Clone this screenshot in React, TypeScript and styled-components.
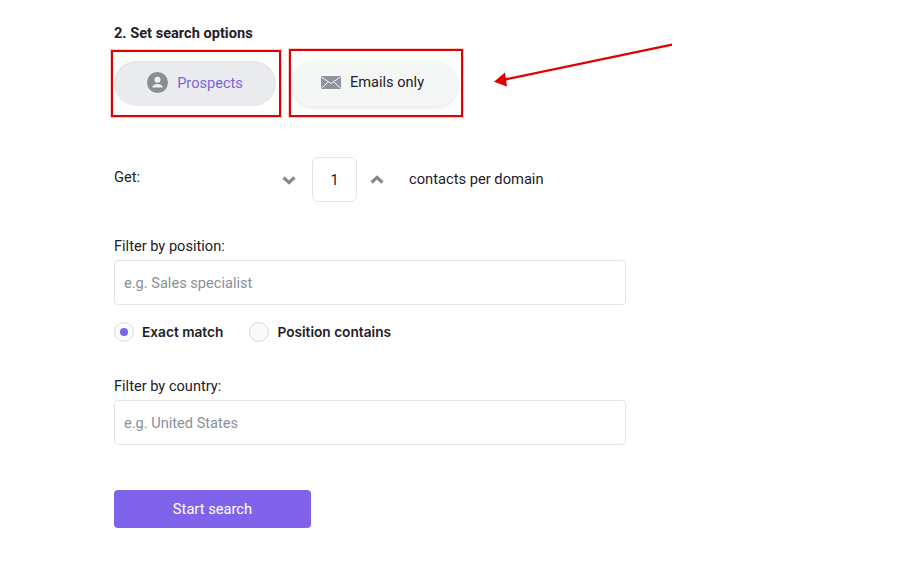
import React from "react";
import styled, { createGlobalStyle } from "styled-components";

const Global = createGlobalStyle`
  html, body { margin: 0; padding: 0; background: #fff; }
  body { font-family: Roboto, "Liberation Sans", sans-serif; color: #1e2026; }
  * { box-sizing: border-box; }
`;

const Page = styled.div`
  position: relative;
  width: 899px;
  height: 563px;
  overflow: hidden;
  padding: 24px 0 0 114px;
`;

const Heading = styled.h2`
  margin: 0;
  font-size: 14.6px;
  line-height: 18px;
  font-weight: 700;
  color: #1e2026;
`;

const Tabs = styled.div`
  display: flex;
  margin-top: 19px;
  gap: 15px;
  height: 45px;
`;

const Tab = styled.div<{ $active?: boolean; $w: number }>`
  width: ${(p) => p.$w}px;
  height: 45px;
  border-radius: 23px;
  display: flex;
  align-items: center;
  justify-content: center;
  gap: 9px;
  padding: ${(p) => (p.$active ? "0 0 2px 0" : "0 4px 3px 0")};
  font-size: 14.6px;
  background: ${(p) => (p.$active ? "#e9ebee" : "#f5f7f7")};
  color: ${(p) => (p.$active ? "#7d63e0" : "#1e2026")};
  box-shadow: ${(p) =>
    p.$active
      ? "inset 0 1px 3px rgba(30,32,38,0.05)"
      : "0 2px 5px rgba(30,32,38,0.10)"};
`;

const CountRow = styled.div`
  display: flex;
  align-items: center;
  margin-top: 51px;
  height: 45px;
`;

const GetLabel = styled.div`
  width: 166px;
  font-size: 14.6px;
  padding-bottom: 6px;
`;

const Chevron = styled.svg`
  width: 18px;
  height: 12px;
  display: block;
`;

const CountBox = styled.div`
  width: 45px;
  height: 45px;
  margin: 0 11px 0 14px;
  border: 1px solid #e2e4e8;
  border-radius: 6px;
  display: flex;
  align-items: center;
  justify-content: center;
  font-size: 14.6px;
`;

const CountUnit = styled.div`
  margin-left: 23px;
  padding-bottom: 2px;
  font-size: 14.7px;
`;

const Field = styled.div`
  margin-top: 35px;
  width: 512px;
`;

const FieldLabel = styled.div`
  font-size: 14.6px;
  line-height: 18px;
  margin-bottom: 5px;
`;

const Input = styled.input`
  display: block;
  width: 100%;
  height: 45px;
  border: 1px solid #e2e4e8;
  border-radius: 4px;
  padding: 0 9px;
  font: 400 14.6px Roboto, sans-serif;
  outline: none;
  &::placeholder { color: #8a909a; opacity: 1; }
`;

const Radios = styled.div`
  display: flex;
  align-items: center;
  margin-top: 17px;
  height: 20px;
`;

const Radio = styled.div<{ $checked?: boolean }>`
  width: 20px;
  height: 20px;
  border-radius: 50%;
  border: 1px solid #d8dae0;
  background: #f9fafc;
  display: flex;
  align-items: center;
  justify-content: center;
  margin-right: 8px;
  &::after {
    content: "";
    display: ${(p) => (p.$checked ? "block" : "none")};
    width: 8px;
    height: 8px;
    border-radius: 50%;
    background: #7d63e8;
  }
`;

const RadioLabel = styled.div<{ $gap?: number }>`
  font-family: Inter, sans-serif;
  font-size: 13.7px;
  font-weight: 600;
  margin-right: ${(p) => p.$gap ?? 0}px;
`;

const Submit = styled.button`
  display: block;
  margin-top: 45px;
  width: 197px;
  height: 38px;
  border: 0;
  border-radius: 4px;
  background: #7f63ea;
  color: #fff;
  font: 400 14.7px Roboto, sans-serif;
`;

const Mark = styled.div<{ $l: number; $t: number; $w: number; $h: number }>`
  position: absolute;
  left: ${(p) => p.$l}px;
  top: ${(p) => p.$t}px;
  width: ${(p) => p.$w}px;
  height: ${(p) => p.$h}px;
  border: 2px solid #e00000;
  box-shadow: 0 0 0 1px rgba(224, 0, 0, 0.2);
`;

const Arrow = styled.svg`
  position: absolute;
  left: 0;
  top: 0;
  pointer-events: none;
`;

const PersonIcon = () => (
  <svg width="21" height="21" viewBox="0 0 21 21">
    <circle cx="10.5" cy="10.5" r="10.5" fill="#8a8d94" />
    <circle cx="10.5" cy="7.8" r="3" fill="#eef0f2" />
    <path d="M5.2 15.4c.6-2.4 2.8-3.3 5.3-3.3s4.7.9 5.3 3.3z" fill="#eef0f2" />
  </svg>
);

const MailIcon = () => (
  <svg width="20" height="13" viewBox="0 0 20 13">
    <rect width="20" height="13" rx="1" fill="#8f939a" />
    <path d="M0.5 1l9.5 6.5L19.5 1M0.5 12.2l6.8-6.3M19.5 12.2l-6.8-6.3" fill="none" stroke="#f5f7f7" strokeWidth="1" />
  </svg>
);

const Down = () => (
  <Chevron viewBox="0 0 18 12">
    <path d="M3.5 3.5 9 8.5l5.5-5" fill="none" stroke="#858b93" strokeWidth="3.2" />
  </Chevron>
);

const Up = () => (
  <Chevron viewBox="0 0 18 12">
    <path d="M3.5 8.5 9 3.5l5.5 5" fill="none" stroke="#858b93" strokeWidth="3.2" />
  </Chevron>
);

export default function App() {
  return (
    <Page>
      <Global />
      <Heading>2. Set search options</Heading>
      <Tabs>
        <Tab $active $w={162}>
          <PersonIcon />
          <span>Prospects</span>
        </Tab>
        <Tab $w={167}>
          <MailIcon />
          <span>Emails only</span>
        </Tab>
      </Tabs>
      <CountRow>
        <GetLabel>Get:</GetLabel>
        <Down />
        <CountBox>1</CountBox>
        <Up />
        <CountUnit>contacts per domain</CountUnit>
      </CountRow>
      <Field>
        <FieldLabel>Filter by position:</FieldLabel>
        <Input placeholder="e.g. Sales specialist" />
      </Field>
      <Radios>
        <Radio $checked />
        <RadioLabel $gap={26}>Exact match</RadioLabel>
        <Radio />
        <RadioLabel>Position contains</RadioLabel>
      </Radios>
      <Field>
        <FieldLabel>Filter by country:</FieldLabel>
        <Input placeholder="e.g. United States" />
      </Field>
      <Submit>Start search</Submit>
      <Mark $l={111} $t={50} $w={170} $h={67} />
      <Mark $l={289} $t={49} $w={174} $h={68} />
      <Arrow width="899" height="563" viewBox="0 0 899 563">
        <path d="M672 44.7 505 79.5" stroke="#e00000" strokeWidth="2.4" fill="none" />
        <path d="M494 81.7 505 72.5 507 86.5z" fill="#e00000" />
      </Arrow>
    </Page>
  );
}
